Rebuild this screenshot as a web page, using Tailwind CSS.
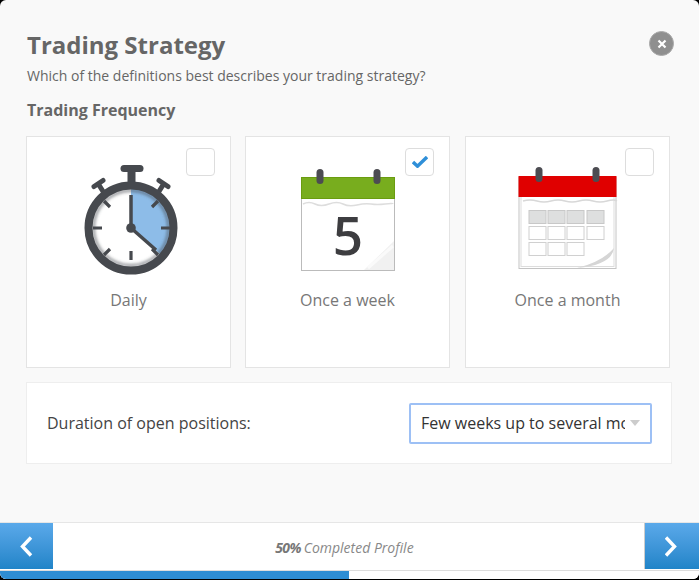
<!doctype html>
<html lang="en">
  <head>
    <meta charset="UTF-8" />
    <title>Trading Strategy</title>
    <script src="https://cdn.jsdelivr.net/npm/@tailwindcss/browser@4"></script>
  </head>
  <body class="bg-black">
    <div class="w-[699px] h-[579px] bg-[#f9f9f9] rounded-[6px] overflow-hidden flex flex-col font-['Open_Sans',sans-serif]">
      <div class="flex-1 pl-[26px] pr-[27px] relative">
        <h1 class="pt-[28px] pl-px text-[24px] leading-[33px] font-bold text-[#666]">Trading Strategy</h1>
        <p class="mt-[5px] pl-px text-[14px] leading-[19px] text-[#666]">Which of the definitions best describes your trading strategy?</p>
        <h2 class="mt-[14px] pl-px text-[16px] leading-[22px] font-bold text-[#666]">Trading Frequency</h2>
        <button class="absolute left-[649px] top-[31px] w-[25px] h-[25px] rounded-full bg-[#8f8f8f] border border-[#aaa] flex items-center justify-center">
          <svg width="10" height="10" viewBox="0 0 10 10"><path d="M1.5 1.5l7 7M8.5 1.5l-7 7" stroke="#fff" stroke-width="2.2" /></svg>
        </button>

        <div class="mt-[15px] flex gap-[14px]">
          <div class="relative w-[205px] h-[232px] bg-white border border-[#e4e4e4] flex flex-col items-center">
            <span class="absolute right-[15px] top-[11px] w-[29px] h-[28px] bg-white border border-[#ddd] rounded-[4px]"></span>
            <svg class="mt-[28px]" width="98" height="112" viewBox="0 0 98 112">
              <defs>
                <filter id="soft" x="-10%" y="-10%" width="120%" height="120%"><feGaussianBlur stdDeviation="1.4" /></filter>
              </defs>
              <rect x="40.5" y="0" width="23" height="7" rx="3.5" fill="#46494e" />
              <rect x="47.5" y="5" width="8" height="14" fill="#46494e" />
              <g fill="none" stroke="#46494e" stroke-width="5" stroke-linecap="round">
                <path d="M24 28l-5-8M14 21.5l9-6" />
                <path d="M78 28l5-8M88 21.5l-9-6" />
              </g>
              <circle cx="51" cy="63" r="43" fill="#fff" />
              <path d="M51 63V20A43 43 0 0 1 83 91.7Z" fill="#8dbce8" />
              <circle cx="51" cy="63" r="37.5" fill="none" stroke="#46494e" stroke-opacity="0.55" stroke-width="3" filter="url(#soft)" />
              <circle cx="51" cy="63" r="42.5" fill="none" stroke="#46494e" stroke-width="8" />
              <g stroke="#46494e" stroke-width="3.2">
                <path d="M51 95V86M13 63h9M81 63h9M24 36l6 6M78 36l-6 6M24 90l6-6M78 90l-6-6" />
                <path d="M51 63V30M51 63l25 22" stroke-width="3.5" />
              </g>
              <circle cx="51" cy="63" r="4.8" fill="#46494e" />
            </svg>
            <span class="mt-[12px] text-[16px] leading-[22px] text-[#777]">Daily</span>
          </div>

          <div class="relative w-[205px] h-[232px] bg-white border border-[#e4e4e4] flex flex-col items-center">
            <span class="absolute right-[15px] top-[11px] w-[29px] h-[28px] bg-white border border-[#ddd] rounded-[4px] flex items-center justify-center">
              <svg width="16" height="12" viewBox="0 0 16 12"><path d="M1 6l4.5 4.2L15 1" fill="none" stroke="#2f8fd8" stroke-width="3.4" /></svg>
            </span>
            <svg class="mt-[31px]" width="94" height="103" viewBox="0 0 94 103">
              <rect x="0.5" y="10.5" width="93" height="92" fill="#fff" stroke="#bbb" />
              <rect x="0.5" y="9.5" width="93" height="21" fill="#78ad1e" stroke="#6a9c10" />
              <path d="M2 36q6-3 12 0t14 0 14 0 14 1 14-1 14 0 8 0" fill="none" stroke="#ddd" stroke-width="1.5" />
              <rect x="15.5" y="1" width="7" height="15" rx="3.5" fill="#4c4c52" />
              <rect x="72.5" y="1" width="7" height="15" rx="3.5" fill="#4c4c52" />
              <text x="47" y="87" text-anchor="middle" font-family="'Open Sans',sans-serif" font-weight="600" font-size="53" fill="#3d3d40">5</text>
              <path d="M63 102L93 73V102Z" fill="#f1f1f1" />
              <path d="M67 100L92 78" stroke="#fafafa" stroke-width="3" />
            </svg>
            <span class="mt-[18px] text-[16px] leading-[22px] text-[#777]">Once a week</span>
          </div>

          <div class="relative w-[205px] h-[232px] bg-white border border-[#e4e4e4] flex flex-col items-center ml-px">
            <span class="absolute right-[15px] top-[11px] w-[29px] h-[28px] bg-white border border-[#ddd] rounded-[4px]"></span>
            <svg class="mt-[30px]" width="100" height="104" viewBox="0 0 100 104">
              <rect x="1" y="10.5" width="97" height="91" fill="#fff" stroke="#c4c4c4" />
              <rect x="3" y="12.5" width="93" height="87" fill="none" stroke="#ddd" />
              <rect x="0.5" y="9" width="98" height="21" fill="#e00000" />
              <path d="M5 34q7-2 14 0t14 0 14 0 14 0 14 0 14 0 10 0" fill="none" stroke="#d8d8d8" stroke-width="1.5" />
              <rect x="17.5" y="0" width="7" height="15" rx="3.5" fill="#4c4c52" />
              <rect x="74.5" y="0" width="7" height="15" rx="3.5" fill="#4c4c52" />
              <g fill="#dedfdf" stroke="#c8c8c8">
                <rect x="11" y="43.5" width="17" height="13" />
                <rect x="30" y="43.5" width="17" height="13" />
                <rect x="49" y="43.5" width="17" height="13" />
                <rect x="69" y="43.5" width="17" height="13" />
              </g>
              <g fill="#fff" stroke="#d0d0d0">
                <rect x="11" y="59.5" width="17" height="13" />
                <rect x="30" y="59.5" width="17" height="13" />
                <rect x="49" y="59.5" width="17" height="13" />
                <rect x="69" y="59.5" width="17" height="13" />
                <rect x="11" y="75.5" width="17" height="13" />
                <rect x="30" y="75.5" width="17" height="13" />
                <rect x="49" y="75.5" width="17" height="13" />
              </g>
              <path d="M59 101Q84 95 96 81Q94 98 59 101Z" fill="#d5d5d5" />
            </svg>
            <span class="mt-[18px] text-[16px] leading-[22px] text-[#777]">Once a month</span>
          </div>
        </div>

        <div class="mt-[14px] w-[646px] h-[82px] bg-white border border-[#eee] flex items-center justify-between pl-5 pr-[19px]">
          <span class="text-[16px] text-[#444]">Duration of open positions:</span>
          <div class="w-[243px] h-[41px] border-2 border-[#9dc0f5] rounded-[2px] bg-white flex items-center pl-[10px] pr-[8px] gap-[5px]">
            <span class="w-[204px] shrink-0 overflow-hidden whitespace-nowrap text-[16px] text-[#333]">Few weeks up to several months</span>
            <span class="w-0 h-0 border-x-[5.5px] border-x-transparent border-t-[6px] border-t-[#ccc]"></span>
          </div>
        </div>
      </div>

      <div class="h-[48px] bg-white border-t border-[#e6e6e6] flex">
        <button class="w-[53px] h-[46px] bg-linear-to-b from-[#5aa9ea] to-[#1f84c8] flex items-center justify-center">
          <svg width="14" height="23" viewBox="0 0 14 23"><path d="M11 2.5L2.5 11.5l8.5 9" fill="none" stroke="#fff" stroke-width="3.4" /></svg>
        </button>
        <p class="flex-1 h-[46px] pr-[8px] pt-[2px] flex items-center justify-center gap-[3px] text-[14px] italic text-[#888]"><b class="font-bold tracking-[-0.7px] text-[#777]">50%</b> Completed Profile</p>
        <button class="w-[55px] h-[46px] border-l border-[#ccc] bg-linear-to-b from-[#5aa9ea] to-[#1f84c8] flex items-center justify-center">
          <svg width="14" height="23" viewBox="0 0 14 23"><path d="M1 2.5L9.5 11.5l-8.5 9" fill="none" stroke="#fff" stroke-width="3.4" /></svg>
        </button>
      </div>
      <div class="h-[9px] bg-white border-t border-[#ddd]">
        <div class="w-[349px] h-full bg-[#2e8dd3]"></div>
      </div>
    </div>
  </body>
</html>
